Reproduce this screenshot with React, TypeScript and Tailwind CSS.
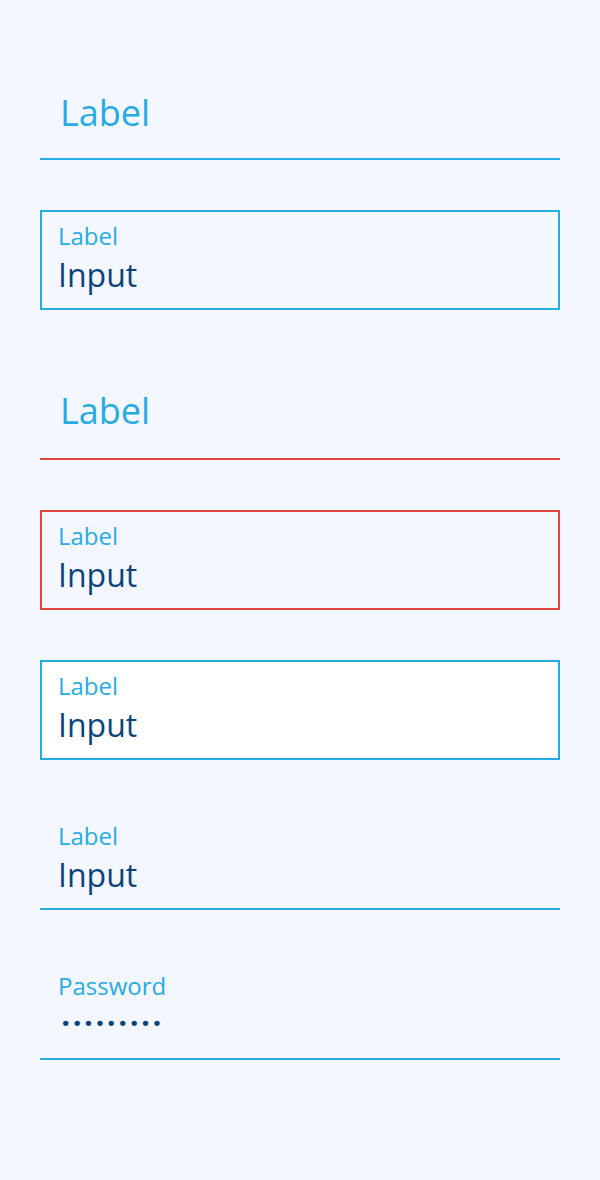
import { useId, useState } from "react";

type Tone = "blue" | "red";

function PromptField({ label, tone = "blue" }: { label: string; tone?: Tone }) {
  return (
    <input
      type="text"
      aria-label={label}
      aria-invalid={tone === "red"}
      placeholder={label}
      className={`block h-25 w-full border-b-2 bg-transparent pl-5 text-4xl text-[#0b4479] outline-none placeholder:text-[#26abe3] ${
        tone === "red" ? "border-[#e2463d] pt-0.5" : "border-[#26abe3] pt-1.5"
      }`}
    />
  );
}

type FieldProps = {
  label: string;
  initial: string;
  type?: "text" | "password";
  tone?: Tone;
  boxed?: boolean;
  filled?: boolean;
};

function Field({ label, initial, type = "text", tone = "blue", boxed = false, filled = false }: FieldProps) {
  const id = useId();
  const [value, setValue] = useState(initial);
  return (
    <div
      className={`flex h-25 flex-col ${boxed ? "border-2 px-4 pt-2" : "border-b-2 px-[18px] pt-2.5"} ${
        tone === "red" ? "border-[#e2463d]" : "border-[#26abe3]"
      } ${filled ? "bg-white" : ""}`}
    >
      <label htmlFor={id} className="text-2xl leading-8 text-[#26abe3]">
        {label}
      </label>
      <input
        id={id}
        type={type}
        value={value}
        onChange={(e) => setValue(e.target.value)}
        className={`h-[46px] w-full bg-transparent text-[#0b4479] outline-none ${
          type === "password"
            ? "pl-0.5 font-['Liberation_Mono',monospace] text-[19px] font-bold"
            : "text-[32px]"
        }`}
      />
    </div>
  );
}

export default function App() {
  return (
    <main className="min-h-screen bg-[#f4f7ff] px-10 py-15 font-['Open_Sans',sans-serif]">
      <form className="flex flex-col gap-[50px]" onSubmit={(e) => e.preventDefault()}>
        <PromptField label="Label" />
        <Field label="Label" initial="Input" boxed />
        <PromptField label="Label" tone="red" />
        <Field label="Label" initial="Input" tone="red" boxed />
        <Field label="Label" initial="Input" boxed filled />
        <Field label="Label" initial="Input" />
        <Field label="Password" initial="lighthous" type="password" />
      </form>
    </main>
  );
}
